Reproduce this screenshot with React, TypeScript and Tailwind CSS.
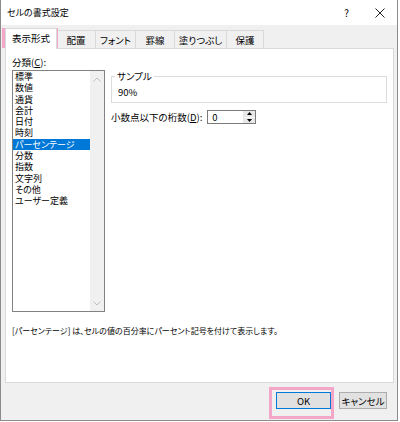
import type { ReactNode } from 'react'

const categories = ['標準', '数値', '通貨', '会計', '日付', '時刻', 'パーセンテージ', '分数', '指数', '文字列', 'その他', 'ユーザー定義']
const tabs = ['配置', 'フォント', '罫線', '塗りつぶし', '保護']
const tabWidths = ['w-[40px]', 'w-[41px]', 'w-[40px]', 'w-[53px]', 'w-[38px]']

function Chevron({ up }: { up?: boolean }) {
  return (
    <svg width="8" height="5" viewBox="0 0 8 5" className="block">
      <path d={up ? 'M0.5 4.5 L4 1 L7.5 4.5' : 'M0.5 0.5 L4 4 L7.5 0.5'} fill="none" stroke="#bfbfbf" strokeWidth="1" />
    </svg>
  )
}

function Btn({ children, primary }: { children: ReactNode; primary?: boolean }) {
  return (
    <div
      className={
        primary
          ? 'w-[55px] h-[17px] flex items-center justify-center bg-[#e1e1e1] border border-[#0078d7]'
          : 'w-[48px] h-[17px] flex items-center justify-center bg-[#e1e1e1] border border-[#adadad]'
      }
    >
      {children}
    </div>
  )
}

export default function App() {
  return (
    <div className="w-[400px] h-[422px] bg-white text-[9.5px] leading-[12px] text-black font-['Noto_Sans_CJK_JP',sans-serif] [font-feature-settings:'palt']">
      <div className="relative w-[398px] h-[421px] border border-t-0 border-[#8c8c8c] bg-[#f0f0f0] flex flex-col">
        {/* タイトルバー */}
        <div className="h-[25px] bg-white flex items-center pl-[6px]">
          <span className="text-[9px]">セルの書式設定</span>
          <span className="ml-auto text-[10px]">?</span>
          <svg width="10" height="10" viewBox="0 0 10 10" className="ml-[26px] mr-[12px]">
            <path d="M0.5 0.5 L9.5 9.5 M9.5 0.5 L0.5 9.5" stroke="#222" strokeWidth="1" />
          </svg>
        </div>

        {/* タブ */}
        <div className="h-[23px] flex items-end pl-[4px]">
          <div className="relative z-10 -mb-px w-[52px] h-[21px] bg-white border border-b-0 border-[#d9d9d9] flex items-center justify-center pb-[2px]">
            表示形式
          </div>
          {tabs.map((t, i) => (
            <div
              key={t}
              className={`${tabWidths[i]} h-[18px] -ml-px first:ml-0 border border-b-0 border-[#d9d9d9] bg-[#f0f0f0] flex items-center justify-center`}
            >
              {t}
            </div>
          ))}
        </div>

        {/* パネル */}
        <div className="ml-[4px] w-[389px] h-[335px] bg-white border border-[#d9d9d9] pl-[6px] pt-[7px]">
          <div className="flex gap-[6px]">
            {/* 分類 */}
            <div className="flex flex-col">
              <div className="h-[12px] mb-[2px]">
                分類(<span className="underline">C</span>):
              </div>
              <div className="w-[93px] h-[242px] border border-[#828282] flex text-[9px]">
                <div className="flex-1 flex flex-col">
                  {categories.map((c) => (
                    <div
                      key={c}
                      className={
                        c === 'パーセンテージ'
                          ? 'h-[11.3px] leading-[11.3px] pl-[2px] bg-[#0078d7] text-white'
                          : 'h-[11.3px] leading-[11.3px] pl-[2px]'
                      }
                    >
                      {c}
                    </div>
                  ))}
                </div>
                <div className="w-[14px] bg-[#f0f0f0] flex flex-col items-center justify-between pt-[6px] pb-[5px]">
                  <Chevron up />
                  <Chevron />
                </div>
              </div>
            </div>

            {/* サンプル・桁数 */}
            <div className="flex flex-col pt-[20px]">
              <div className="relative w-[276px] h-[27px] border border-[#dcdcdc]">
                <span className="absolute -top-[7px] left-[3px] bg-white px-[2px]">サンプル</span>
                <div className="pt-[9px] pl-[6px]">90%</div>
              </div>
              <div className="mt-[7px] flex items-center h-[14px]">
                <span>
                  小数点以下の桁数(<span className="underline">D</span>):
                </span>
                <div className="ml-[5px] w-[49px] h-[14px] border border-[#7a7a7a] flex">
                  <div className="flex-1 pl-[4px] leading-[12px]">0</div>
                  <div className="w-[12px] flex flex-col border-l border-[#e6e6e6]">
                    <div className="flex-1 bg-[#e8e8e8] border-b border-[#fafafa] flex items-center justify-center">
                      <svg width="5" height="3" viewBox="0 0 5 3"><path d="M2.5 0 L5 3 L0 3 Z" fill="#000" /></svg>
                    </div>
                    <div className="flex-1 bg-[#e8e8e8] flex items-center justify-center">
                      <svg width="5" height="3" viewBox="0 0 5 3"><path d="M0 0 L5 0 L2.5 3 Z" fill="#000" /></svg>
                    </div>
                  </div>
                </div>
              </div>
            </div>
          </div>
          <div className="mt-[13px] text-[8px]">[パーセンテージ] は、セルの値の百分率にパーセント記号を付けて表示します。</div>
        </div>

        {/* ボタン */}
        <div className="flex justify-end gap-[8px] mt-[9px] pr-[10px]">
          <Btn primary>OK</Btn>
          <Btn>キャンセル</Btn>
        </div>

        {/* 強調枠 */}
        <div className="absolute left-[1px] top-[28px] w-[56px] h-[20px] border-[3px] border-[#f3a6c8]" />
        <div className="absolute left-[268px] top-[387px] w-[65px] h-[32px] border-[3px] border-[#f3a6c8]" />
      </div>
    </div>
  )
}
